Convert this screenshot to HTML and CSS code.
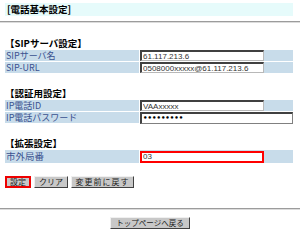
FILE: index.html
```html
<!DOCTYPE html>
<html lang="ja">
<head>
<meta charset="utf-8">
<link rel="stylesheet" href="styles.css">
</head>
<body>
<div class="title">[電話基本設定]</div>
<div class="rule"></div>
<div class="content">
  <div class="section">
    <div class="heading">【SIPサーバ設定】</div>
    <div class="row"><div class="label">SIPサーバ名</div><div class="field"><input class="inp" value="61.117.213.6"></div></div>
    <div class="row"><div class="label">SIP-URL</div><div class="field"><input class="inp" value="0508000xxxxx@61.117.213.6"></div></div>
  </div>
  <div class="section">
    <div class="heading">【認証用設定】</div>
    <div class="row"><div class="label">IP電話ID</div><div class="field"><input class="inp" value="VAAxxxxx"></div></div>
    <div class="row"><div class="label">IP電話パスワード</div><div class="field white"><input class="inp wide" type="password" value="123456789"></div></div>
  </div>
  <div class="section">
    <div class="heading">【拡張設定】</div>
    <div class="row tall"><div class="label">市外局番</div><div class="field"><input class="inp red" value="03"></div></div>
  </div>
  <div class="buttons">
    <button class="btn active">設定</button>
    <button class="btn">クリア</button>
    <button class="btn long">変更前に戻す</button>
  </div>
</div>
<div class="rule bottom"></div>
<div class="footer"><button class="btn top">トップページへ戻る</button></div>
</body>
</html>
```
FILE: styles.css
```css
html, body { margin: 0; padding: 0; background: #fff; }
body {
  font-family: "Noto Sans CJK JP", "DejaVu Sans", sans-serif;
  font-size: 9px;
  color: #000;
  width: 300px;
  padding-top: 3px;
}
.title {
  margin: 0 7px 0 5px;
  height: 13px;
  line-height: 13px;
  background: #e6fbfb;
  font-weight: bold;
  font-size: 9.5px;
  padding-left: 2px;
}
.rule {
  margin-top: 5px;
  height: 1px;
  border-top: 1px solid #9c9c9c;
  background: #dcdcdc;
}
.content { margin: 0 7px 0 5px; }
.section { margin-top: 14px; }
.heading {
  font-weight: bold;
  font-size: 9.5px;
  height: 12px;
  line-height: 12px;
  margin-bottom: 1px;
}
.row {
  display: flex;
  height: 11px;
  margin-top: 1px;
}
.row.tall { height: 13px; }
.label {
  width: 133px;
  background: #c8dcea;
  color: #3a5290;
  line-height: 11px;
  padding-left: 1px;
}
.row.tall .label { line-height: 13px; font-size: 9.5px; }
.field {
  flex: 1;
  margin-left: 1px;
  background: #c8dcea;
  display: flex;
  align-items: center;
}
.field.white { background: #fff; }
.inp {
  box-sizing: border-box;
  width: 124px;
  height: 11px;
  margin: 0;
  padding: 0 1px;
  font-family: "Liberation Sans", sans-serif;
  font-size: 8px;
  border: 1px solid #b8b8b8;
  border-top-color: #404040;
  border-left-color: #404040;
  border-top-width: 2px;
  border-left-width: 2px;
  background: #fff;
  color: #333;
  outline: none;
}
.inp.wide {
  width: 100%;
  height: 12px;
  font-family: "DejaVu Sans", sans-serif;
  font-size: 7px;
  font-weight: bold;
  letter-spacing: 0;
  color: #000;
  border-color: #404040 #808080 #808080 #404040;
}
.inp.red {
  border: 2px solid #f00;
  height: 12px;
}
.buttons {
  margin-top: 13px;
  display: flex;
  gap: 3px;
}
.btn {
  box-sizing: border-box;
  height: 12px;
  padding: 0 4px;
  margin: 0;
  font-family: "Noto Sans CJK JP", sans-serif;
  font-size: 8px;
  line-height: 8px;
  color: #222;
  background: #c8c8c8;
  border: 1px solid;
  border-color: #f0f0f0 #404040 #404040 #f0f0f0;
  white-space: nowrap;
}
.btn.active { border: 2px solid #e00; padding: 0 3px; }
.btn.long { width: 63px; letter-spacing: 1px; padding: 0; }
.rule.bottom { margin-top: 20px; }
.footer {
  display: flex;
  padding-left: 110px;
  margin-top: 7px;
}
.btn.top { width: 80px; padding: 0; font-size: 7.5px; }
```
